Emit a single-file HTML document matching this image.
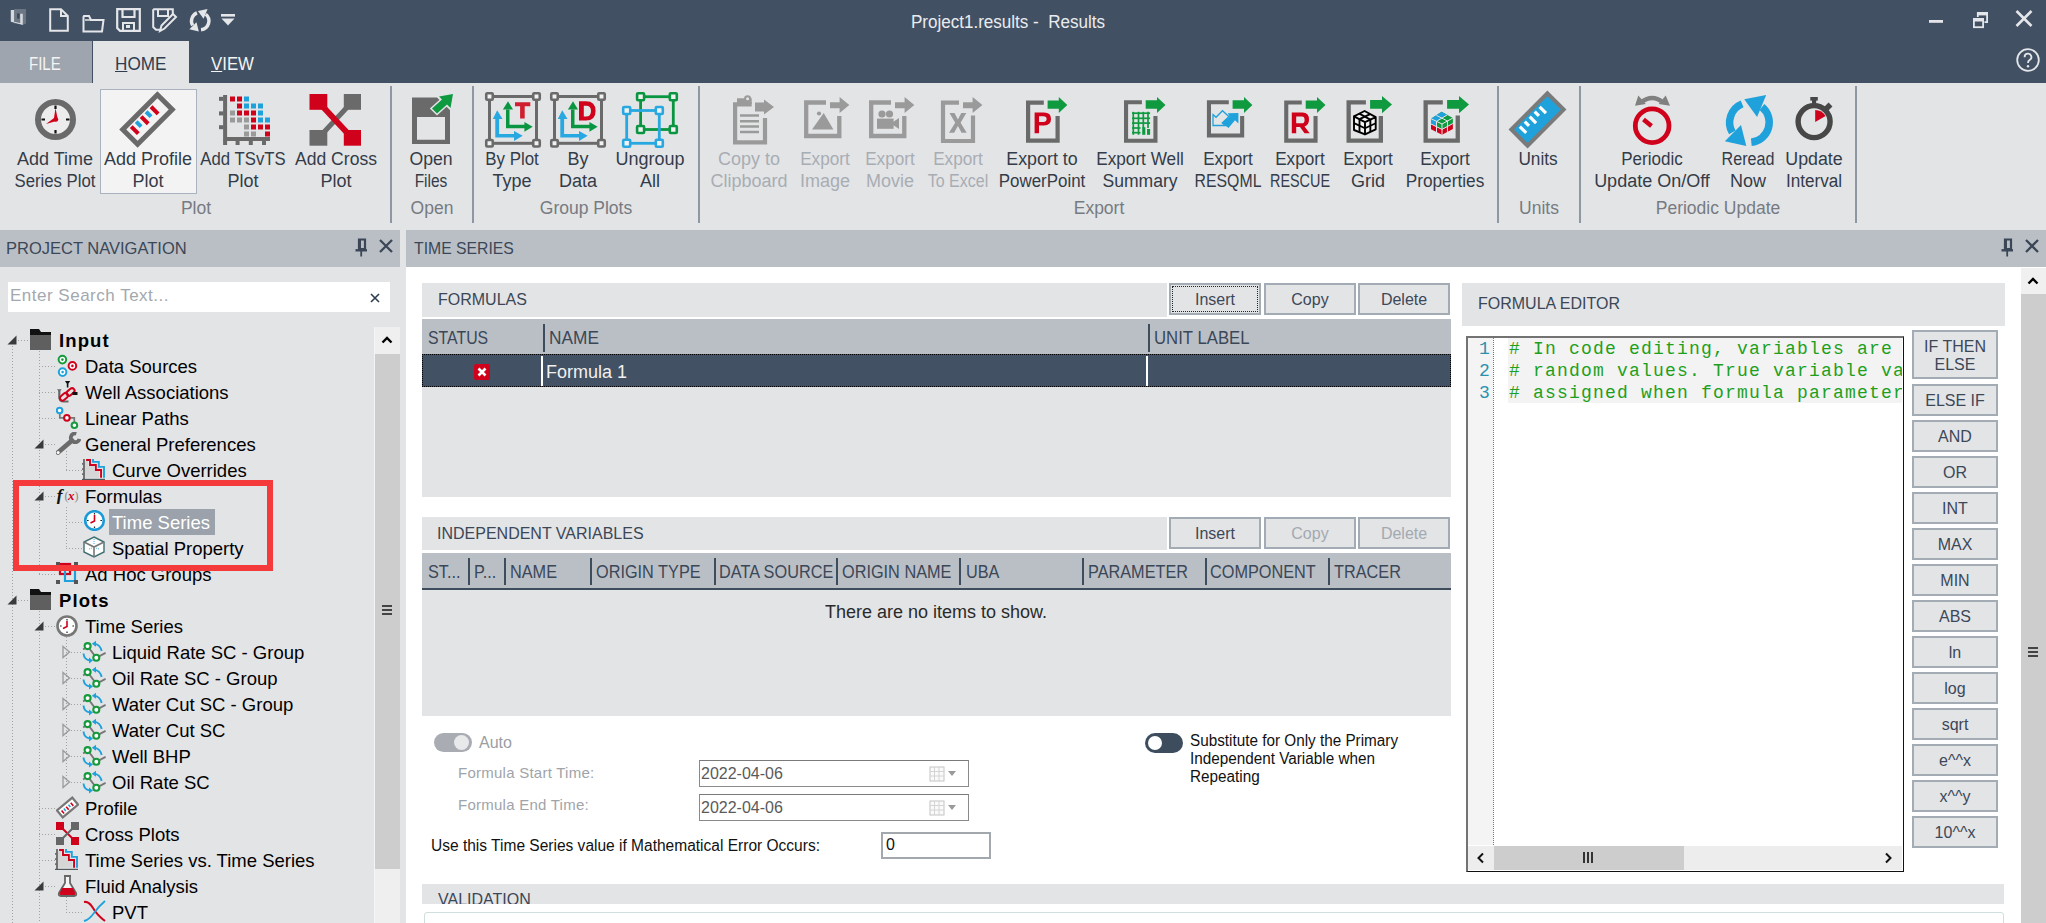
<!DOCTYPE html><html><head><meta charset="utf-8"><style>
*{margin:0;padding:0;box-sizing:border-box}
html,body{width:2046px;height:923px;overflow:hidden;background:#e3e4e6;font-family:"Liberation Sans",sans-serif;position:relative}
.a{position:absolute}
.t{position:absolute;white-space:nowrap}
.rb{position:absolute;text-align:center;white-space:nowrap;font-size:18px;line-height:22px;color:#333c48}
.rb.dis{color:#a8adb4}
.gl{position:absolute;font-size:17.5px;color:#767b82;white-space:nowrap;text-align:center}
.sep{position:absolute;top:86px;width:2px;height:137px;background:#8e98a4}
.tr{position:absolute;font-size:18.5px;color:#1a1a1a;white-space:nowrap;line-height:26px}
.vd{position:absolute;border-left:1px dotted #9a9a9a;width:0}
.hd{position:absolute;border-top:1px dotted #9a9a9a;height:0}
.btn{position:absolute;border:2px solid #a3abb5;background:#e3e4e6;font-size:16px;color:#3c4858;text-align:center}
.fb{position:absolute;left:1912px;width:86px;height:32px;border:2px solid #a3abb5;background:#e3e4e6;font-size:16px;color:#3c4858;text-align:center;line-height:28px}
.gh{position:absolute;font-size:18px;color:#3b4757;white-space:nowrap}
.gs{position:absolute;width:2px;background:#3e4d5e}
</style></head><body><div class="a" style="left:0;top:0;width:2046px;height:83px;background:#425063"></div>
<div class="t" style="left:0;top:10px;width:2016px;text-align:center;font-size:18px;transform:scaleX(0.947);color:#e9ecef;line-height:24px">Project1.results -&nbsp; Results</div>
<svg class="a" style="left:10px;top:9px;overflow:visible" width="17" height="17" viewBox="0 0 17 17"><path d="M4.1 0.3 L15.8 0 V14.5 L12.8 15.9z" fill="#6b7785"/><rect x="4.1" y="0.3" width="11.7" height="14.2" fill="#6b7785"/><rect x="7" y="4.2" width="2.6" height="5.6" rx="1" fill="#3b4858"/><path d="M0.8 1 H4.1 V12.7 L10.2 14 V4.8 H12.8 V15.9 L0.8 12.7z" fill="#d5d8dc"/></svg>
<svg class="a" style="left:49px;top:8px;overflow:visible" width="20" height="24" viewBox="0 0 20 24"><path d="M1.2 1.2 H12 L18.8 8 V22.8 H1.2z M12 1.2 V8 H18.8" fill="none" stroke="#e4e6e9" stroke-width="2"/></svg>
<svg class="a" style="left:82px;top:12px;overflow:visible" width="23" height="21" viewBox="0 0 23 21"><path d="M1.5 5 V19.5 H20 L21.5 8 H9 L7 4 H2z" fill="none" stroke="#e4e6e9" stroke-width="2"/><path d="M3 8 H21" stroke="#e4e6e9" stroke-width="1.5"/></svg>
<svg class="a" style="left:116px;top:8px;overflow:visible" width="25" height="24" viewBox="0 0 25 24"><path d="M1.2 1.2 H23.8 V22.8 H4 L1.2 20z" fill="none" stroke="#e4e6e9" stroke-width="2.2"/><path d="M6.5 2 V9 H18.5 V2" fill="none" stroke="#e4e6e9" stroke-width="2.2"/><path d="M7 22 V15 H18 V22" fill="none" stroke="#e4e6e9" stroke-width="2"/><rect x="10" y="17" width="4" height="3" fill="#e4e6e9"/></svg>
<svg class="a" style="left:152px;top:8px;overflow:visible" width="25" height="25" viewBox="0 0 25 25"><path d="M1.2 1.2 H20.8 V10 M1.2 1.2 V19 L4 21.8 H8" fill="none" stroke="#e4e6e9" stroke-width="2"/><path d="M6 2 V8 H16 V2" fill="none" stroke="#e4e6e9" stroke-width="2"/><path d="M8 23 L9.5 17.5 L21 6 L24 9 L12.5 20.5z" fill="#425063" stroke="#e4e6e9" stroke-width="2"/></svg>
<svg class="a" style="left:189px;top:9px;overflow:visible" width="22" height="23" viewBox="0 0 22 23"><g transform="scale(0.44)"><path d="M18.1 8.9 A20 20 0 0 0 8.3 37.4" fill="none" stroke="#e4e6e9" stroke-width="7.8"/><path d="M17 30 L22.3 51 L0.8 46.2z" fill="#e4e6e9"/><path d="M27.3 47.3 A20 20 0 0 0 38 12" fill="none" stroke="#e4e6e9" stroke-width="7.8"/><path d="M20.2 4.3 L42.2 0 L33.1 22z" fill="#e4e6e9"/></g></svg>
<svg class="a" style="left:221px;top:14px;overflow:visible" width="14" height="12" viewBox="0 0 14 12"><rect x="0" y="0" width="14" height="2.6" fill="#e4e6e9"/><path d="M0.5 4.5 H13.5 L7 11.5z" fill="#e4e6e9"/></svg>
<svg class="a" style="left:1929px;top:20px;overflow:visible" width="15" height="4" viewBox="0 0 15 4"><rect x="0" y="0" width="14" height="2.8" fill="#e4e6e9"/></svg>
<svg class="a" style="left:1972px;top:11px;overflow:visible" width="17" height="18" viewBox="0 0 17 18"><path d="M5.8 6 V1.9 H15.1 V11.2 H12.5" fill="none" stroke="#e4e6e9" stroke-width="1.8"/><rect x="5" y="1" width="10.9" height="3.4" fill="#e4e6e9"/><rect x="1.9" y="8" width="9.2" height="8.2" fill="none" stroke="#e4e6e9" stroke-width="1.8"/><rect x="1" y="7.1" width="11" height="3.4" fill="#e4e6e9"/></svg>
<svg class="a" style="left:2015px;top:10px;overflow:visible" width="18" height="17" viewBox="0 0 18 17"><path d="M1.5 1 L16.5 16 M16.5 1 L1.5 16" stroke="#e4e6e9" stroke-width="2.6"/></svg>
<svg class="a" style="left:2016px;top:48px;overflow:visible" width="24" height="24" viewBox="0 0 24 24"><circle cx="12" cy="12" r="10.8" fill="none" stroke="#e4e6e9" stroke-width="1.8"/><path d="M8.6 9.2 A3.4 3.4 0 1 1 13.6 12 Q12 13 12 15" fill="none" stroke="#e4e6e9" stroke-width="1.8"/><circle cx="12" cy="18.3" r="1.2" fill="#e4e6e9"/></svg>
<div class="a" style="left:0;top:41px;width:92px;height:42px;background:#9ea5ae"></div>
<div class="t" style="left:29px;top:54px;font-size:17.5px;color:#f4f4f4;line-height:20px;transform:scaleX(0.86);transform-origin:0 0">FILE</div>
<div class="a" style="left:93px;top:41px;width:96px;height:42px;background:#e3e4e6"></div>
<div class="t" style="left:115px;top:54px;font-size:17.5px;color:#2f3d4f;line-height:20px;transform:scaleX(0.98);transform-origin:0 0"><u>H</u>OME</div>
<div class="t" style="left:211px;top:54px;font-size:17.5px;color:#f4f4f4;line-height:20px;transform:scaleX(0.96);transform-origin:0 0"><u>V</u>IEW</div>
<div class="a" style="left:100px;top:89px;width:97px;height:105px;background:#f3f3f3;border:1px solid #a9b3bf"></div>
<div class="rb" style="left:-25px;top:148px;width:160px;">Add Time</div>
<div class="rb" style="left:-25px;top:170px;width:160px;transform:scaleX(0.93);">Series Plot</div>
<div class="rb" style="left:68px;top:148px;width:160px;">Add Profile</div>
<div class="rb" style="left:68px;top:170px;width:160px;">Plot</div>
<div class="rb" style="left:163px;top:148px;width:160px;transform:scaleX(0.93);">Add TSvTS</div>
<div class="rb" style="left:163px;top:170px;width:160px;">Plot</div>
<div class="rb" style="left:256px;top:148px;width:160px;transform:scaleX(0.975);">Add Cross</div>
<div class="rb" style="left:256px;top:170px;width:160px;">Plot</div>
<div class="rb" style="left:351px;top:148px;width:160px;transform:scaleX(0.98);">Open</div>
<div class="rb" style="left:351px;top:170px;width:160px;transform:scaleX(0.86);">Files</div>
<div class="rb" style="left:432px;top:148px;width:160px;transform:scaleX(0.94);">By Plot</div>
<div class="rb" style="left:432px;top:170px;width:160px;">Type</div>
<div class="rb" style="left:498px;top:148px;width:160px;">By</div>
<div class="rb" style="left:498px;top:170px;width:160px;">Data</div>
<div class="rb" style="left:570px;top:148px;width:160px;">Ungroup</div>
<div class="rb" style="left:570px;top:170px;width:160px;">All</div>
<div class="rb dis" style="left:669px;top:148px;width:160px;">Copy to</div>
<div class="rb dis" style="left:669px;top:170px;width:160px;">Clipboard</div>
<div class="rb dis" style="left:745px;top:148px;width:160px;transform:scaleX(0.955);">Export</div>
<div class="rb dis" style="left:745px;top:170px;width:160px;">Image</div>
<div class="rb dis" style="left:810px;top:148px;width:160px;transform:scaleX(0.955);">Export</div>
<div class="rb dis" style="left:810px;top:170px;width:160px;">Movie</div>
<div class="rb dis" style="left:878px;top:148px;width:160px;transform:scaleX(0.955);">Export</div>
<div class="rb dis" style="left:878px;top:170px;width:160px;transform:scaleX(0.89);">To Excel</div>
<div class="rb" style="left:962px;top:148px;width:160px;transform:scaleX(0.99);">Export to</div>
<div class="rb" style="left:962px;top:170px;width:160px;transform:scaleX(0.94);">PowerPoint</div>
<div class="rb" style="left:1060px;top:148px;width:160px;transform:scaleX(0.955);">Export Well</div>
<div class="rb" style="left:1060px;top:170px;width:160px;transform:scaleX(0.975);">Summary</div>
<div class="rb" style="left:1148px;top:148px;width:160px;transform:scaleX(0.955);">Export</div>
<div class="rb" style="left:1148px;top:170px;width:160px;transform:scaleX(0.88);">RESQML</div>
<div class="rb" style="left:1220px;top:148px;width:160px;transform:scaleX(0.955);">Export</div>
<div class="rb" style="left:1220px;top:170px;width:160px;transform:scaleX(0.8);">RESCUE</div>
<div class="rb" style="left:1288px;top:148px;width:160px;transform:scaleX(0.955);">Export</div>
<div class="rb" style="left:1288px;top:170px;width:160px;">Grid</div>
<div class="rb" style="left:1365px;top:148px;width:160px;transform:scaleX(0.955);">Export</div>
<div class="rb" style="left:1365px;top:170px;width:160px;transform:scaleX(0.957);">Properties</div>
<div class="rb" style="left:1458px;top:148px;width:160px;transform:scaleX(0.956);">Units</div>
<div class="rb" style="left:1572px;top:148px;width:160px;transform:scaleX(0.945);">Periodic</div>
<div class="rb" style="left:1572px;top:170px;width:160px;">Update On/Off</div>
<div class="rb" style="left:1668px;top:148px;width:160px;transform:scaleX(0.895);">Reread</div>
<div class="rb" style="left:1668px;top:170px;width:160px;">Now</div>
<div class="rb" style="left:1734px;top:148px;width:160px;transform:scaleX(0.99);">Update</div>
<div class="rb" style="left:1734px;top:170px;width:160px;transform:scaleX(0.95);">Interval</div>
<div class="sep" style="left:390px"></div>
<div class="sep" style="left:472px"></div>
<div class="sep" style="left:698px"></div>
<div class="sep" style="left:1497px"></div>
<div class="sep" style="left:1579px"></div>
<div class="sep" style="left:1855px"></div>
<div class="gl" style="left:96px;top:197.5px;width:200px;line-height:20px">Plot</div>
<div class="gl" style="left:332px;top:197.5px;width:200px;line-height:20px">Open</div>
<div class="gl" style="left:486px;top:197.5px;width:200px;line-height:20px">Group Plots</div>
<div class="gl" style="left:999px;top:197.5px;width:200px;line-height:20px">Export</div>
<div class="gl" style="left:1439px;top:197.5px;width:200px;line-height:20px">Units</div>
<div class="gl" style="left:1618px;top:197.5px;width:200px;line-height:20px">Periodic Update</div>
<svg class="a" style="left:35px;top:99px;overflow:visible" width="41" height="41" viewBox="0 0 41 41"><circle cx="20.5" cy="20.5" r="17.5" fill="#ececec" stroke="#6a6a6a" stroke-width="6"/><path d="M20.5 6.5v3.5M20.5 31v3.5M6.5 20.5H10M31 20.5h3.5" stroke="#111" stroke-width="2.2"/><path d="M20.5 9 L22.5 19 L21.5 22 L11 25 L19 19z" fill="#d0021b"/><circle cx="21" cy="20.5" r="2.2" fill="#d0021b"/></svg>
<svg class="a" style="left:120px;top:92px;overflow:visible" width="55" height="55" viewBox="0 0 55 55"><g transform="rotate(-45 27.5 27.5)"><rect x="3" y="17" width="49" height="21" fill="#f3f3f3" stroke="#6a6a6a" stroke-width="5"/><path d="M11 21v10M25 21v10M39 21v10" stroke="#d0021b" stroke-width="4"/><path d="M18 21v7M32 21v7" stroke="#1fa2dc" stroke-width="4"/></g></svg>
<svg class="a" style="left:219px;top:94px;overflow:visible" width="52" height="51" viewBox="0 0 52 51"><path d="M6.1 1 V45.1 H51" fill="none" stroke="#6a6a6a" stroke-width="4"/><rect x="0" y="2.8499999999999996" width="4.5" height="4" fill="#6a6a6a"/><rect x="0" y="17.4" width="4.5" height="4" fill="#6a6a6a"/><rect x="0" y="31.200000000000003" width="4.5" height="4" fill="#6a6a6a"/><rect x="4.1" y="46" width="4" height="5" fill="#6a6a6a"/><rect x="16.6" y="46" width="4" height="5" fill="#6a6a6a"/><rect x="29.8" y="46" width="4" height="5" fill="#6a6a6a"/><rect x="43" y="46" width="4" height="5" fill="#6a6a6a"/><rect x="11" y="2.5" width="5" height="5" fill="#d0021b"/><rect x="18" y="2.5" width="5" height="5" fill="#d0021b"/><rect x="25" y="2.5" width="5" height="5" fill="#1fa2dc"/><rect x="18" y="9.5" width="5" height="5" fill="#d0021b"/><rect x="25" y="9.5" width="5" height="5" fill="#1fa2dc"/><rect x="32" y="9.5" width="5" height="5" fill="#1fa2dc"/><rect x="39" y="9.5" width="5" height="5" fill="#1fa2dc"/><rect x="11" y="16.5" width="5" height="5" fill="#9a9a9a"/><rect x="18" y="16.5" width="5" height="5" fill="#d0021b"/><rect x="25" y="16.5" width="5" height="5" fill="#d0021b"/><rect x="32" y="16.5" width="5" height="5" fill="#d0021b"/><rect x="39" y="16.5" width="5" height="5" fill="#1fa2dc"/><rect x="11" y="23.5" width="5" height="5" fill="#9a9a9a"/><rect x="18" y="23.5" width="5" height="5" fill="#9a9a9a"/><rect x="25" y="23.5" width="5" height="5" fill="#9a9a9a"/><rect x="32" y="23.5" width="5" height="5" fill="#d0021b"/><rect x="39" y="23.5" width="5" height="5" fill="#1fa2dc"/><rect x="46" y="23.5" width="5" height="5" fill="#1fa2dc"/><rect x="25" y="30.5" width="5" height="5" fill="#9a9a9a"/><rect x="32" y="30.5" width="5" height="5" fill="#d0021b"/><rect x="39" y="30.5" width="5" height="5" fill="#d0021b"/><rect x="46" y="30.5" width="5" height="5" fill="#d0021b"/><rect x="25" y="37.5" width="5" height="5" fill="#9a9a9a"/><rect x="32" y="37.5" width="5" height="5" fill="#9a9a9a"/><rect x="46" y="37.5" width="5" height="5" fill="#d0021b"/></svg>
<svg class="a" style="left:309px;top:94px;overflow:visible" width="52" height="52" viewBox="0 0 52 52"><path d="M43 8 L9.5 44" stroke="#6a6a6a" stroke-width="5"/><path d="M9.5 8 L43 44" stroke="#d0021b" stroke-width="6"/><rect x="0.5" y="0" width="17.8" height="15.8" fill="#d0021b"/><rect x="34.8" y="0" width="17.2" height="15.8" fill="#6a6a6a"/><rect x="0.5" y="36" width="17.8" height="15.7" fill="#6a6a6a"/><rect x="34.8" y="36" width="17.2" height="15.7" fill="#d0021b"/></svg>
<svg class="a" style="left:412px;top:94px;overflow:visible" width="42" height="50" viewBox="0 0 42 50"><path d="M0 3.4 H25 L38 16 V50 H0z M5 23 V45.7 H33 V23z" fill="#6a6a6a" fill-rule="evenodd"/><path d="M41 0 L38.5 14 L35 10.5 L25 19.5 L20 14.5 L30 5.5 L27 2.5z" fill="#0f9a40" stroke="#e3e4e6" stroke-width="3" paint-order="stroke" stroke-linejoin="miter"/></svg>
<svg class="a" style="left:485px;top:92px;overflow:visible" width="56" height="56" viewBox="0 0 56 56"><rect x="4.5" y="4.5" width="47.0" height="46.8" fill="none" stroke="#6a6a6a" stroke-width="3"/><rect x="1.25" y="1.25" width="6.5" height="6.5" rx="1" fill="#f2f2f2" stroke="#6a6a6a" stroke-width="2.6"/><rect x="1.25" y="48.05" width="6.5" height="6.5" rx="1" fill="#f2f2f2" stroke="#6a6a6a" stroke-width="2.6"/><rect x="48.25" y="1.25" width="6.5" height="6.5" rx="1" fill="#f2f2f2" stroke="#6a6a6a" stroke-width="2.6"/><rect x="48.25" y="48.05" width="6.5" height="6.5" rx="1" fill="#f2f2f2" stroke="#6a6a6a" stroke-width="2.6"/><path d="M10.3 26.9 H14.1 V42.1 H29 V39 L37.7 43.85 L29 49.1 V45.6 H10.3z" fill="#27a8e0"/><path d="M7.8 26.9 L12.2 18.2 L17.5 26.9z" fill="#27a8e0"/><path d="M21 17.5 H24.5 V32.8 H39.4 V30 L47.7 34.8 L39.4 39.7 V36.2 H21z" fill="#0a9640"/><path d="M17.9 17.5 L23 9.2 L28 17.5z" fill="#0a9640"/><path d="M30 10.2 H45.3 V14.2 H39.7 V26.5 H35.1 V14.2 H30z" fill="#cf1f2e"/></svg>
<svg class="a" style="left:550px;top:92px;overflow:visible" width="56" height="56" viewBox="0 0 56 56"><rect x="4.5" y="4.5" width="47.0" height="46.8" fill="none" stroke="#6a6a6a" stroke-width="3"/><rect x="1.25" y="1.25" width="6.5" height="6.5" rx="1" fill="#f2f2f2" stroke="#6a6a6a" stroke-width="2.6"/><rect x="1.25" y="48.05" width="6.5" height="6.5" rx="1" fill="#f2f2f2" stroke="#6a6a6a" stroke-width="2.6"/><rect x="48.25" y="1.25" width="6.5" height="6.5" rx="1" fill="#f2f2f2" stroke="#6a6a6a" stroke-width="2.6"/><rect x="48.25" y="48.05" width="6.5" height="6.5" rx="1" fill="#f2f2f2" stroke="#6a6a6a" stroke-width="2.6"/><path d="M10.3 26.9 H14.1 V42.1 H29 V39 L37.7 43.85 L29 49.1 V45.6 H10.3z" fill="#27a8e0"/><path d="M7.8 26.9 L12.2 18.2 L17.5 26.9z" fill="#27a8e0"/><path d="M21 17.5 H24.5 V32.8 H39.4 V30 L47.7 34.8 L39.4 39.7 V36.2 H21z" fill="#0a9640"/><path d="M17.9 17.5 L23 9.2 L28 17.5z" fill="#0a9640"/><path d="M29 9.2 H36 Q45.6 9.2 45.6 18.9 Q45.6 28.6 36 28.6 H29z M33.8 13.7 V24.4 H36 Q41 24.4 41 18.9 Q41 13.7 36 13.7z" fill="#d0021b" fill-rule="evenodd"/></svg>
<svg class="a" style="left:621px;top:92px;overflow:visible" width="57" height="57" viewBox="0 0 57 57"><rect x="19.6" y="4.7" width="32.699999999999996" height="32.8" fill="none" stroke="#0a9640" stroke-width="2.8"/><rect x="16.1" y="1.2000000000000002" width="7" height="7" rx="1" fill="#f2f2f2" stroke="#0a9640" stroke-width="2.6"/><rect x="16.1" y="34.0" width="7" height="7" rx="1" fill="#f2f2f2" stroke="#0a9640" stroke-width="2.6"/><rect x="48.8" y="1.2000000000000002" width="7" height="7" rx="1" fill="#f2f2f2" stroke="#0a9640" stroke-width="2.6"/><rect x="48.8" y="34.0" width="7" height="7" rx="1" fill="#f2f2f2" stroke="#0a9640" stroke-width="2.6"/><rect x="5.7" y="18.5" width="32.599999999999994" height="32.8" fill="none" stroke="#27a8e0" stroke-width="2.8"/><rect x="2.2" y="15.0" width="7" height="7" rx="1" fill="#f2f2f2" stroke="#27a8e0" stroke-width="2.6"/><rect x="2.2" y="47.8" width="7" height="7" rx="1" fill="#f2f2f2" stroke="#27a8e0" stroke-width="2.6"/><rect x="34.8" y="15.0" width="7" height="7" rx="1" fill="#f2f2f2" stroke="#27a8e0" stroke-width="2.6"/><rect x="34.8" y="47.8" width="7" height="7" rx="1" fill="#f2f2f2" stroke="#27a8e0" stroke-width="2.6"/></svg>
<svg class="a" style="left:733px;top:94px;overflow:visible" width="42" height="51" viewBox="0 0 42 51"><path d="M18.7 10.3 H2.1 V48.4 H32 V24" fill="none" stroke="#9a9a9a" stroke-width="4.2"/><path d="M4 4.3 H18.7 V10 H4z" fill="#9a9a9a"/><circle cx="14.6" cy="4.8" r="3.6" fill="#9a9a9a"/><circle cx="14.6" cy="4.8" r="1.5" fill="#e3e4e6"/><path d="M7 21.5h19M7 27.3h19M7 32.5h19M7 38h19" stroke="#9a9a9a" stroke-width="2.5"/><path d="M22 8.4 H31 V5.4 L41 12.9 L31 20.4 V17.4 H22z" fill="#9a9a9a"/></svg>
<svg class="a" style="left:804px;top:97px;overflow:visible" width="47" height="42" viewBox="0 0 47 42"><path d="M22 5.5 H2.2 V39 H35.3 V19" fill="none" stroke="#9a9a9a" stroke-width="4.3"/><circle cx="15" cy="16.5" r="2.1" fill="#9a9a9a"/><path d="M8 32.6 L29.4 32.6 L19.7 16z" fill="#9a9a9a"/><path d="M26 5.2 H35.6 V0 L45.3 8 L35.6 16 V11.2 H26z" fill="#9a9a9a"/></svg>
<svg class="a" style="left:869px;top:97px;overflow:visible" width="47" height="42" viewBox="0 0 47 42"><path d="M22 5.5 H2.2 V39 H35.3 V19" fill="none" stroke="#9a9a9a" stroke-width="4.3"/><circle cx="13" cy="17" r="3.6" fill="#9a9a9a"/><circle cx="20.5" cy="17" r="3.6" fill="#9a9a9a"/><rect x="8" y="21.6" width="16.6" height="10.2" fill="#9a9a9a"/><path d="M24 25 L30 21 V32 L24 28z" fill="#9a9a9a"/><path d="M26 5.2 H35.6 V0 L45.3 8 L35.6 16 V11.2 H26z" fill="#9a9a9a"/></svg>
<svg class="a" style="left:941px;top:97px;overflow:visible" width="44" height="46" viewBox="0 0 44 46"><path d="M18 5.7 H2 V44 H32 V18.5" fill="none" stroke="#9a9a9a" stroke-width="4.2"/><path d="M22 5.2 H31.6 V0 L41.4 8 L31.6 16 V11.2 H22z" fill="#9a9a9a"/><path d="M8.5 16 H13.5 L16.9 22.5 L20.3 16 H25.3 L19.6 25.8 L25.7 35.7 H20.6 L16.9 29 L13.1 35.7 H8 L14.2 25.8z" fill="#9a9a9a"/></svg>
<svg class="a" style="left:1026px;top:97px;overflow:visible" width="44" height="47" viewBox="0 0 44 47"><path d="M17.8 5.6 H2.1 V43.6 H31.6 V19" fill="none" stroke="#6a6a6a" stroke-width="4.2"/><path d="M21.6 3.5 H32.8 V0 L41.3 8.0 L32.8 16 V11.7 H21.6z" fill="#0f9a40"/><path d="M8.6 15.6 H18 Q25 15.6 25 22 Q25 28.4 18 28.4 H13 V36.3 H8.6z M13 19.3 V24.9 H17.5 Q20.6 24.9 20.6 22.1 Q20.6 19.3 17.5 19.3z" fill="#d0021b" fill-rule="evenodd"/></svg>
<svg class="a" style="left:1123px;top:97px;overflow:visible" width="44" height="47" viewBox="0 0 44 47"><path d="M18.9 5.25 H3.05 V43.75 H32.45 V19" fill="none" stroke="#6a6a6a" stroke-width="4.1"/><path d="M22.7 3.2 H34 V0 L42.5 8.0 L34 16 V11.8 H22.7z" fill="#0f9a40"/><path d="M10.3 14.8 V37.8" stroke="#0f9a40" stroke-width="1.7"/><path d="M15.5 14.8 V37.8" stroke="#0f9a40" stroke-width="1.7"/><path d="M20.3 14.8 V31" stroke="#0f9a40" stroke-width="1.7"/><path d="M25 14.8 V31" stroke="#0f9a40" stroke-width="1.7"/><path d="M9 16.2 H27.1" stroke="#0f9a40" stroke-width="1.7"/><path d="M9 21.3 H27.1" stroke="#0f9a40" stroke-width="1.7"/><path d="M9 26.1 H27.1" stroke="#0f9a40" stroke-width="1.7"/><path d="M9 31 H17.5" stroke="#0f9a40" stroke-width="1.7"/><path d="M9 35.7 H17.5" stroke="#0f9a40" stroke-width="1.7"/><rect x="19.2" y="30.2" width="3.1" height="7.6" fill="#0f9a40"/><rect x="24" y="32" width="3.1" height="5.8" fill="#0f9a40"/></svg>
<svg class="a" style="left:1206px;top:97px;overflow:visible" width="48" height="42" viewBox="0 0 48 42"><path d="M22.8 5.25 H2.9499999999999997 V38.45 H36.150000000000006 V19" fill="none" stroke="#6a6a6a" stroke-width="4.1"/><path d="M26.6 3.2 H38 V0 L46.4 8.0 L38 16 V11.8 H26.6z" fill="#0f9a40"/><path d="M32.4 15.9 V26.5 L29 23.3 L22.5 30.9 L16 25.8 L23.5 19.5 L21.8 16.2z" fill="#1fa2dc"/><path d="M7 17.6 L10 20.3 L16.5 13.7 L22.8 19.6 L16.2 26 L19.5 28.5 H7z" fill="none" stroke="#1fa2dc" stroke-width="1.3" stroke-linejoin="miter"/></svg>
<svg class="a" style="left:1283px;top:97px;overflow:visible" width="44" height="47" viewBox="0 0 44 47"><path d="M18.8 5.55 H3.25 V43.650000000000006 H32.550000000000004 V19" fill="none" stroke="#6a6a6a" stroke-width="4.1"/><path d="M22.7 3.5 H34 V0 L42.5 8.0 L34 16 V11.7 H22.7z" fill="#0f9a40"/><path d="M8.8 15.6 H19.5 Q26 15.6 26 22.8 Q26 27.8 21.5 29.6 L26.7 36.3 H21.5 L17 30 H13.2 V36.3 H8.8z M13.2 19.6 V26.3 H19 Q21.6 26.3 21.6 22.95 Q21.6 19.6 19 19.6z" fill="#d0021b" fill-rule="evenodd"/></svg>
<svg class="a" style="left:1346px;top:96px;overflow:visible" width="47" height="48" viewBox="0 0 47 48"><path d="M19.9 6.35 H2.65 V44.65 H34.85 V20" fill="none" stroke="#6a6a6a" stroke-width="4.3"/><path d="M24.1 3.9 H36 V0 L46 8.6 L36 17.2 V12.8 H24.1z" fill="#0f9a40"/><path d="M18.60 15.00 L29.70 21.20 L19.00 26.10 L8.00 20.30z M8.00 20.30 L19.00 26.10 L19.00 38.40 L8.00 34.00z M19.00 26.10 L29.70 21.20 L29.70 33.30 L19.00 38.40z" fill="#f4f4f4" stroke="#000" stroke-width="1.9" stroke-linejoin="round"/><path d="M13.30 17.65 L24.35 23.65" stroke="#000" stroke-width="1.9"/><path d="M24.15 18.10 L13.50 23.20" stroke="#000" stroke-width="1.9"/><path d="M8.00 27.15 L19.00 32.25" stroke="#000" stroke-width="1.9"/><path d="M19.00 32.25 L29.70 27.25" stroke="#000" stroke-width="1.9"/><path d="M13.50 23.20 L13.50 36.20" stroke="#000" stroke-width="1.9"/><path d="M24.35 23.65 L24.35 35.85" stroke="#000" stroke-width="1.9"/></svg>
<svg class="a" style="left:1423px;top:96px;overflow:visible" width="47" height="48" viewBox="0 0 47 48"><path d="M19.8 6.35 H2.65 V44.65 H34.75 V19.6" fill="none" stroke="#6a6a6a" stroke-width="4.3"/><path d="M24.1 3.9 H36 V0 L46 8.6 L36 17.2 V12.8 H24.1z" fill="#0f9a40"/><path d="M18.60 15.80 L29.90 22.00 L19.00 28.00 L8.00 22.70z" fill="#0f9a40"/><path d="M18.60 15.80 L24.25 18.90 L13.50 25.35 L8.00 22.70z" fill="#1fa2dc"/><path d="M8.00 22.70 L19.00 28.00 L19.00 33.40 L8.00 28.00z" fill="#0f9a40"/><path d="M8.00 22.70 L13.50 25.35 L13.50 30.70 L8.00 28.00z" fill="#1fa2dc"/><path d="M8.00 28.00 L19.00 33.40 L19.00 38.80 L8.00 33.30z" fill="#d0021b"/><path d="M19.00 28.00 L29.90 22.00 L29.90 27.50 L19.00 33.40z" fill="#0f9a40"/><path d="M19.00 33.40 L29.90 27.50 L29.90 33.00 L19.00 38.80z" fill="#d0021b"/><path d="M13.30 19.25 L24.45 25.00" stroke="#e3e4e6" stroke-width="1"/><path d="M24.25 18.90 L13.50 25.35" stroke="#e3e4e6" stroke-width="1"/><path d="M8.00 28.00 L19.00 33.40" stroke="#e3e4e6" stroke-width="1"/><path d="M19.00 33.40 L29.90 27.50" stroke="#e3e4e6" stroke-width="1"/><path d="M13.50 25.35 L13.50 36.05" stroke="#e3e4e6" stroke-width="1"/><path d="M24.45 25.00 L24.45 35.90" stroke="#e3e4e6" stroke-width="1"/><path d="M19.00 28.00 L19.00 38.80" stroke="#e3e4e6" stroke-width="1"/><path d="M8.00 22.70 L19.00 28.00" stroke="#e3e4e6" stroke-width="1"/><path d="M19.00 28.00 L29.90 22.00" stroke="#e3e4e6" stroke-width="1"/></svg>
<svg class="a" style="left:1510px;top:92px;overflow:visible" width="55" height="55" viewBox="0 0 55 55"><g transform="rotate(-45 27.5 27.5)"><rect x="2" y="16" width="51" height="23" fill="#1fa2dc" stroke="#7a7a7a" stroke-width="4"/><path d="M10 20v9M17 20v6M24 20v9M31 20v6M38 20v9" stroke="#fff" stroke-width="3.2"/></g></svg>
<svg class="a" style="left:1632px;top:95px;overflow:visible" width="40" height="51" viewBox="0 0 40 51"><circle cx="20.15" cy="30.75" r="16.85" fill="none" stroke="#d0021b" stroke-width="4.8"/><path d="M11.5 24.5 L19.5 31" stroke="#d0021b" stroke-width="4.5"/><path d="M9 7.5 Q20.3 -1.5 31 7.5" fill="none" stroke="#808080" stroke-width="4.2"/><path d="M3 10.7 L6.3 0.5 L13.8 9z" fill="#808080"/><path d="M38 10.7 L33.7 0.5 L26.7 9z" fill="#808080"/></svg>
<svg class="a" style="left:1724px;top:95px;overflow:visible" width="50" height="52" viewBox="0 0 50 52"><path d="M18.1 8.9 A20 20 0 0 0 8.3 37.4" fill="none" stroke="#1fa2dc" stroke-width="7.5"/><path d="M17 30 L22.3 51 L0.8 46.2z" fill="#1fa2dc"/><path d="M27.3 47.3 A20 20 0 0 0 38 12" fill="none" stroke="#1fa2dc" stroke-width="7.5"/><path d="M20.2 4.3 L42.2 0 L33.1 22z" fill="#1fa2dc"/></svg>
<svg class="a" style="left:1795px;top:97px;overflow:visible" width="40" height="45" viewBox="0 0 40 45"><circle cx="19.1" cy="24.6" r="16" fill="none" stroke="#474747" stroke-width="5.4"/><rect x="15.3" y="0" width="7.5" height="3.6" fill="#474747"/><rect x="17" y="2" width="4.2" height="6" fill="#474747"/><path d="M31 12 L35.5 7.5" stroke="#474747" stroke-width="5.5"/><path d="M20.2 24.9 V13 A12 12 0 0 1 30.6 19z" fill="#d0021b"/></svg>
<div class="a" style="left:0;top:230px;width:400px;height:37px;background:#babfc6"></div>
<div class="t" style="left:5.5px;top:238.3px;font-size:17.3px;color:#3b4757;line-height:20px;transform:scaleX(0.955);transform-origin:0 0">PROJECT NAVIGATION</div>
<div class="a" style="left:8px;top:282px;width:382px;height:30px;background:#fff"></div>
<div class="t" style="left:10px;top:285px;font-size:17px;letter-spacing:0.5px;color:#a3a8ae;line-height:22px">Enter Search Text...</div>

<svg class="a" style="left:355px;top:238px" width="13" height="19"><path d="M4 1.5 H10 V11 H4z" fill="none" stroke="#3b4757" stroke-width="2.2"/><rect x="3" y="1" width="3" height="11" fill="#3b4757"/><path d="M0.5 12.3 H12" stroke="#3b4757" stroke-width="2.4"/><path d="M6.2 13 V18.5" stroke="#3b4757" stroke-width="1.8"/></svg>
<svg class="a" style="left:378px;top:238px" width="16" height="16"><path d="M2 2L14 14M14 2L2 14" stroke="#3b4757" stroke-width="2.3"/></svg>
<svg class="a" style="left:370px;top:293px" width="10" height="10"><path d="M1 1L9 9M9 1L1 9" stroke="#2d3e50" stroke-width="1.6"/></svg>
<div class="a" style="left:374px;top:327px;width:26px;height:596px;background:#cdcdcd;border-left:1px solid #f4f4f4"></div>
<div class="a" style="left:375px;top:327px;width:25px;height:27px;background:#efefef"></div>
<svg class="a" style="left:381px;top:335px" width="12" height="9"><path d="M1.5 7.5L6 3L10.5 7.5" stroke="#000" stroke-width="2.4" fill="none"/></svg>
<div class="a" style="left:375px;top:869px;width:25px;height:54px;background:#efefef"></div>
<svg class="a" style="left:381px;top:604px" width="12" height="12"><path d="M1 2h10M1 6h10M1 10h10" stroke="#444" stroke-width="2"/></svg>

<div class="a" style="left:12px;top:346px;width:1px;height:577px;background:repeating-linear-gradient(to bottom,#a2a2a2 0 1px,transparent 1px 3px)"></div>
<div class="a" style="left:39px;top:351px;width:1px;height:224px;background:repeating-linear-gradient(to bottom,#a2a2a2 0 1px,transparent 1px 3px)"></div>
<div class="a" style="left:39px;top:611px;width:1px;height:312px;background:repeating-linear-gradient(to bottom,#a2a2a2 0 1px,transparent 1px 3px)"></div>
<div class="a" style="left:66px;top:451px;width:1px;height:20px;background:repeating-linear-gradient(to bottom,#a2a2a2 0 1px,transparent 1px 3px)"></div>
<div class="a" style="left:66px;top:507px;width:1px;height:42px;background:repeating-linear-gradient(to bottom,#a2a2a2 0 1px,transparent 1px 3px)"></div>
<div class="a" style="left:66px;top:637px;width:1px;height:146px;background:repeating-linear-gradient(to bottom,#a2a2a2 0 1px,transparent 1px 3px)"></div>
<div class="a" style="left:66px;top:897px;width:1px;height:16px;background:repeating-linear-gradient(to bottom,#a2a2a2 0 1px,transparent 1px 3px)"></div>
<svg class="a" style="left:7px;top:335px" width="10" height="10"><path d="M0.5 9.5 L9.5 0.5 V9.5z" fill="#3a3a3a"/></svg>
<div class="a" style="left:18px;top:340px;width:10px;height:1px;background:repeating-linear-gradient(to right,#a2a2a2 0 1px,transparent 1px 3px)"></div>
<svg class="a" style="left:29px;top:329px" width="23" height="21" viewBox="0 0 23 21"><path d="M1 0h9l2 3h10v3H1z" fill="#111"/><rect x="1" y="6" width="21" height="15" fill="#5f5f5f"/></svg>
<div class="tr" style="left:59px;top:327.5px;color:#000;font-weight:bold;letter-spacing:1.1px">Input</div>
<div class="a" style="left:39px;top:366px;width:16px;height:1px;background:repeating-linear-gradient(to right,#a2a2a2 0 1px,transparent 1px 3px)"></div>
<svg class="a" style="left:56px;top:354px" width="23" height="23" viewBox="0 0 23 23"><circle cx="6.4" cy="5.6" r="3.8" fill="#fff" stroke="#159a3c" stroke-width="2"/><circle cx="6.4" cy="5.6" r="1.3" fill="#159a3c"/><circle cx="16.4" cy="11.9" r="3.8" fill="#fff" stroke="#d0021b" stroke-width="2"/><circle cx="16.4" cy="11.9" r="1.3" fill="#d0021b"/><circle cx="6.6" cy="18.1" r="3.8" fill="#fff" stroke="#1fa2dc" stroke-width="2"/><circle cx="6.6" cy="18.1" r="1.3" fill="#1fa2dc"/></svg>
<div class="tr" style="left:85px;top:353.5px;color:#000;font-weight:normal">Data Sources</div>
<div class="a" style="left:39px;top:392px;width:16px;height:1px;background:repeating-linear-gradient(to right,#a2a2a2 0 1px,transparent 1px 3px)"></div>
<svg class="a" style="left:56px;top:380px" width="23" height="23" viewBox="0 0 23 23"><path d="M3.3 11 V17 Q3.3 21.5 8 21.5 H12.5" fill="none" stroke="#666" stroke-width="2.2"/><path d="M1 9.3 H5.7 L3.3 12.3z" fill="#666"/><g fill="none" stroke="#d0021b" stroke-width="2"><rect x="3.5" y="14.3" width="9" height="5" rx="2.5" transform="rotate(-40 8 16.8)"/><rect x="10" y="9.5" width="9" height="5" rx="2.5" transform="rotate(-40 14.5 12)"/></g><path d="M9 1 H14.2 L11.6 5z" fill="#111"/><path d="M11.6 4 V7.5" stroke="#111" stroke-width="1.6"/><rect x="16.5" y="12" width="5" height="3" fill="#111"/></svg>
<div class="tr" style="left:85px;top:379.5px;color:#000;font-weight:normal">Well Associations</div>
<div class="a" style="left:39px;top:418px;width:16px;height:1px;background:repeating-linear-gradient(to right,#a2a2a2 0 1px,transparent 1px 3px)"></div>
<svg class="a" style="left:56px;top:406px" width="23" height="24" viewBox="0 0 23 24"><path d="M3.8 7 V11.9 H18.3 V17" fill="none" stroke="#777" stroke-width="1.7"/><circle cx="3.6" cy="4.5" r="2.8" fill="#fff" stroke="#1fa2dc" stroke-width="2"/><circle cx="10.9" cy="11.9" r="2.8" fill="#fff" stroke="#d0021b" stroke-width="2"/><circle cx="18.4" cy="19.3" r="2.8" fill="#fff" stroke="#159a3c" stroke-width="2"/></svg>
<div class="tr" style="left:85px;top:405.5px;color:#000;font-weight:normal">Linear Paths</div>
<svg class="a" style="left:34px;top:439px" width="10" height="10"><path d="M0.5 9.5 L9.5 0.5 V9.5z" fill="#3a3a3a"/></svg>
<div class="a" style="left:45px;top:444px;width:10px;height:1px;background:repeating-linear-gradient(to right,#a2a2a2 0 1px,transparent 1px 3px)"></div>
<svg class="a" style="left:56px;top:432px" width="25" height="25" viewBox="0 0 25 25"><path d="M2 20.5 L16 8.5" stroke="#6b6b6b" stroke-width="4.8" stroke-linecap="round"/><path d="M23.45 6.94 A4.4 4.4 0 1 1 20.34 1.55" fill="none" stroke="#6b6b6b" stroke-width="3.8"/><circle cx="2.1" cy="20.4" r="1.5" fill="#fff"/></svg>
<div class="tr" style="left:85px;top:431.5px;color:#000;font-weight:normal">General Preferences</div>
<div class="a" style="left:66px;top:470px;width:16px;height:1px;background:repeating-linear-gradient(to right,#a2a2a2 0 1px,transparent 1px 3px)"></div>
<svg class="a" style="left:82px;top:459px" width="24" height="22" viewBox="0 0 24 22"><path d="M3 2 H6 V7 H12 V12 H17 V18.7 H3z" fill="#d6d6d6"/><path d="M2 0 V20.2" stroke="#5f5f5f" stroke-width="1.7"/><path d="M0 20.4 H23" stroke="#4f5a5a" stroke-width="1.2"/><rect x="0" y="4.2" width="1.3" height="1.4" fill="#555"/><rect x="0" y="9.4" width="1.3" height="1.4" fill="#555"/><rect x="0" y="14.4" width="1.3" height="1.4" fill="#555"/><path d="M4.1 1 H8 V6 H13.85 V11 H19.05 V18.7" fill="none" stroke="#d0021b" stroke-width="1.9"/><path d="M11 0 V2.9 H16.8 V7.9 H22 V18.7" fill="none" stroke="#1fa2dc" stroke-width="1.9"/></svg>
<div class="tr" style="left:112px;top:457.5px;color:#000;font-weight:normal">Curve Overrides</div>
<svg class="a" style="left:34px;top:491px" width="10" height="10"><path d="M0.5 9.5 L9.5 0.5 V9.5z" fill="#3a3a3a"/></svg>
<div class="a" style="left:45px;top:496px;width:10px;height:1px;background:repeating-linear-gradient(to right,#a2a2a2 0 1px,transparent 1px 3px)"></div>
<svg class="a" style="left:56px;top:484px" width="23" height="20" viewBox="0 0 23 20"><text x="0.5" y="17.5" font-family="Liberation Serif" font-style="italic" font-weight="bold" font-size="18" fill="#111">f</text><text x="8.5" y="16" font-family="Liberation Serif" font-size="12" fill="#888">(</text><text x="12" y="16" font-family="Liberation Serif" font-style="italic" font-weight="bold" font-size="13" fill="#d0021b">x</text><text x="18.5" y="16" font-family="Liberation Serif" font-size="12" fill="#888">)</text></svg>
<div class="tr" style="left:85px;top:483.5px;color:#000;font-weight:normal">Formulas</div>
<div class="a" style="left:66px;top:522px;width:16px;height:1px;background:repeating-linear-gradient(to right,#a2a2a2 0 1px,transparent 1px 3px)"></div>
<svg class="a" style="left:83px;top:510px" width="23" height="21" viewBox="0 0 23 21"><circle cx="11.5" cy="10.5" r="9.3" fill="#fff" stroke="#1a9ad6" stroke-width="2.6"/><path d="M11.5 3v1.6M11.5 16.4V18M4 10.5h1.6M17.4 10.5H19" stroke="#222" stroke-width="1.2"/><path d="M11.5 5 V11 L7.5 13" fill="none" stroke="#d0021b" stroke-width="1.6"/></svg>
<div class="a" style="left:109px;top:509px;width:106px;height:26px;background:#9ba2ab"></div>
<div class="tr" style="left:112px;top:509.5px;color:#fff;font-weight:normal">Time Series</div>
<div class="a" style="left:66px;top:548px;width:16px;height:1px;background:repeating-linear-gradient(to right,#a2a2a2 0 1px,transparent 1px 3px)"></div>
<svg class="a" style="left:83px;top:536px" width="22" height="22" viewBox="0 0 22 22"><path d="M11 1 L21 6 V16 L11 21 L1 16 V6z" fill="#fff" stroke="#3f6f73" stroke-width="1.4"/><path d="M1 6 L11 11 L21 6 M11 11 V21" fill="none" stroke="#777" stroke-width="1.6"/><path d="M11 3v5M6 13l3 -1M16 13l-3 -1" stroke="#1fa2dc" stroke-width="0.9" stroke-dasharray="1 1"/></svg>
<div class="tr" style="left:112px;top:535.5px;color:#000;font-weight:normal">Spatial Property</div>
<div class="a" style="left:39px;top:574px;width:16px;height:1px;background:repeating-linear-gradient(to right,#a2a2a2 0 1px,transparent 1px 3px)"></div>
<svg class="a" style="left:56px;top:562px" width="22" height="22" viewBox="0 0 22 22"><rect x="4" y="2" width="10" height="10" fill="none" stroke="#d0021b" stroke-width="2.2"/><path d="M9 8 V19 H19 V9" fill="none" stroke="#1fa2dc" stroke-width="2.2"/><rect x="0" y="0" width="4" height="4" fill="#555"/><rect x="18" y="0" width="4" height="4" fill="#555"/><rect x="0" y="18" width="4" height="4" fill="#555"/><rect x="18" y="18" width="4" height="4" fill="#555"/></svg>
<div class="tr" style="left:85px;top:561.5px;color:#000;font-weight:normal">Ad Hoc Groups</div>
<svg class="a" style="left:7px;top:595px" width="10" height="10"><path d="M0.5 9.5 L9.5 0.5 V9.5z" fill="#3a3a3a"/></svg>
<div class="a" style="left:18px;top:600px;width:10px;height:1px;background:repeating-linear-gradient(to right,#a2a2a2 0 1px,transparent 1px 3px)"></div>
<svg class="a" style="left:29px;top:589px" width="23" height="21" viewBox="0 0 23 21"><path d="M1 0h9l2 3h10v3H1z" fill="#111"/><rect x="1" y="6" width="21" height="15" fill="#5f5f5f"/></svg>
<div class="tr" style="left:59px;top:587.5px;color:#000;font-weight:bold;letter-spacing:1.1px">Plots</div>
<svg class="a" style="left:34px;top:621px" width="10" height="10"><path d="M0.5 9.5 L9.5 0.5 V9.5z" fill="#3a3a3a"/></svg>
<div class="a" style="left:45px;top:626px;width:10px;height:1px;background:repeating-linear-gradient(to right,#a2a2a2 0 1px,transparent 1px 3px)"></div>
<svg class="a" style="left:56px;top:615px" width="22" height="22" viewBox="0 0 22 22"><circle cx="11" cy="11" r="9.5" fill="#fff" stroke="#777" stroke-width="2.6"/><path d="M11 4v1.6M11 16.4V18M4 11h1.6M16.4 11H18" stroke="#222" stroke-width="1.2"/><path d="M11 6 V11.5 L7 13.5" fill="none" stroke="#d0021b" stroke-width="1.6"/></svg>
<div class="tr" style="left:85px;top:613.5px;color:#000;font-weight:normal">Time Series</div>
<div class="a" style="left:71px;top:652px;width:11px;height:1px;background:repeating-linear-gradient(to right,#a2a2a2 0 1px,transparent 1px 3px)"></div>
<svg class="a" style="left:82px;top:640px" width="24" height="24" viewBox="0 0 24 24"><path d="M1.2 9.5 L5.6 6.1 L14.3 17.8 L23.6 12.9" fill="none" stroke="#777" stroke-width="1.8"/><path d="M12.5 3.6 Q18 4.5 19.7 11" fill="none" stroke="#1fa2dc" stroke-width="1.9"/><path d="M9.8 3.8 L14 0.8 L14 6.8z" fill="#1fa2dc"/><path d="M1.5 13.5 Q2 19.5 8 20.5" fill="none" stroke="#1fa2dc" stroke-width="1.9"/><path d="M11 20.5 L7 17.5 L7 23.5z" fill="#1fa2dc"/><circle cx="5.6" cy="6.1" r="3" fill="#fff" stroke="#159a3c" stroke-width="2.1"/><circle cx="14.3" cy="17.8" r="3" fill="#fff" stroke="#159a3c" stroke-width="2.1"/></svg>
<div class="tr" style="left:112px;top:639.5px;color:#000;font-weight:normal">Liquid Rate SC - Group</div>
<svg class="a" style="left:62px;top:645px" width="9" height="14"><path d="M1 1.5 L7.5 7 L1 12.5z" fill="none" stroke="#9a9a9a" stroke-width="1.3"/></svg>
<div class="a" style="left:71px;top:678px;width:11px;height:1px;background:repeating-linear-gradient(to right,#a2a2a2 0 1px,transparent 1px 3px)"></div>
<svg class="a" style="left:82px;top:666px" width="24" height="24" viewBox="0 0 24 24"><path d="M1.2 9.5 L5.6 6.1 L14.3 17.8 L23.6 12.9" fill="none" stroke="#777" stroke-width="1.8"/><path d="M12.5 3.6 Q18 4.5 19.7 11" fill="none" stroke="#1fa2dc" stroke-width="1.9"/><path d="M9.8 3.8 L14 0.8 L14 6.8z" fill="#1fa2dc"/><path d="M1.5 13.5 Q2 19.5 8 20.5" fill="none" stroke="#1fa2dc" stroke-width="1.9"/><path d="M11 20.5 L7 17.5 L7 23.5z" fill="#1fa2dc"/><circle cx="5.6" cy="6.1" r="3" fill="#fff" stroke="#159a3c" stroke-width="2.1"/><circle cx="14.3" cy="17.8" r="3" fill="#fff" stroke="#159a3c" stroke-width="2.1"/></svg>
<div class="tr" style="left:112px;top:665.5px;color:#000;font-weight:normal">Oil Rate SC - Group</div>
<svg class="a" style="left:62px;top:671px" width="9" height="14"><path d="M1 1.5 L7.5 7 L1 12.5z" fill="none" stroke="#9a9a9a" stroke-width="1.3"/></svg>
<div class="a" style="left:71px;top:704px;width:11px;height:1px;background:repeating-linear-gradient(to right,#a2a2a2 0 1px,transparent 1px 3px)"></div>
<svg class="a" style="left:82px;top:692px" width="24" height="24" viewBox="0 0 24 24"><path d="M1.2 9.5 L5.6 6.1 L14.3 17.8 L23.6 12.9" fill="none" stroke="#777" stroke-width="1.8"/><path d="M12.5 3.6 Q18 4.5 19.7 11" fill="none" stroke="#1fa2dc" stroke-width="1.9"/><path d="M9.8 3.8 L14 0.8 L14 6.8z" fill="#1fa2dc"/><path d="M1.5 13.5 Q2 19.5 8 20.5" fill="none" stroke="#1fa2dc" stroke-width="1.9"/><path d="M11 20.5 L7 17.5 L7 23.5z" fill="#1fa2dc"/><circle cx="5.6" cy="6.1" r="3" fill="#fff" stroke="#159a3c" stroke-width="2.1"/><circle cx="14.3" cy="17.8" r="3" fill="#fff" stroke="#159a3c" stroke-width="2.1"/></svg>
<div class="tr" style="left:112px;top:691.5px;color:#000;font-weight:normal">Water Cut SC - Group</div>
<svg class="a" style="left:62px;top:697px" width="9" height="14"><path d="M1 1.5 L7.5 7 L1 12.5z" fill="none" stroke="#9a9a9a" stroke-width="1.3"/></svg>
<div class="a" style="left:71px;top:730px;width:11px;height:1px;background:repeating-linear-gradient(to right,#a2a2a2 0 1px,transparent 1px 3px)"></div>
<svg class="a" style="left:82px;top:718px" width="24" height="24" viewBox="0 0 24 24"><path d="M1.2 9.5 L5.6 6.1 L14.3 17.8 L23.6 12.9" fill="none" stroke="#777" stroke-width="1.8"/><path d="M12.5 3.6 Q18 4.5 19.7 11" fill="none" stroke="#1fa2dc" stroke-width="1.9"/><path d="M9.8 3.8 L14 0.8 L14 6.8z" fill="#1fa2dc"/><path d="M1.5 13.5 Q2 19.5 8 20.5" fill="none" stroke="#1fa2dc" stroke-width="1.9"/><path d="M11 20.5 L7 17.5 L7 23.5z" fill="#1fa2dc"/><circle cx="5.6" cy="6.1" r="3" fill="#fff" stroke="#159a3c" stroke-width="2.1"/><circle cx="14.3" cy="17.8" r="3" fill="#fff" stroke="#159a3c" stroke-width="2.1"/></svg>
<div class="tr" style="left:112px;top:717.5px;color:#000;font-weight:normal">Water Cut SC</div>
<svg class="a" style="left:62px;top:723px" width="9" height="14"><path d="M1 1.5 L7.5 7 L1 12.5z" fill="none" stroke="#9a9a9a" stroke-width="1.3"/></svg>
<div class="a" style="left:71px;top:756px;width:11px;height:1px;background:repeating-linear-gradient(to right,#a2a2a2 0 1px,transparent 1px 3px)"></div>
<svg class="a" style="left:82px;top:744px" width="24" height="24" viewBox="0 0 24 24"><path d="M1.2 9.5 L5.6 6.1 L14.3 17.8 L23.6 12.9" fill="none" stroke="#777" stroke-width="1.8"/><path d="M12.5 3.6 Q18 4.5 19.7 11" fill="none" stroke="#1fa2dc" stroke-width="1.9"/><path d="M9.8 3.8 L14 0.8 L14 6.8z" fill="#1fa2dc"/><path d="M1.5 13.5 Q2 19.5 8 20.5" fill="none" stroke="#1fa2dc" stroke-width="1.9"/><path d="M11 20.5 L7 17.5 L7 23.5z" fill="#1fa2dc"/><circle cx="5.6" cy="6.1" r="3" fill="#fff" stroke="#159a3c" stroke-width="2.1"/><circle cx="14.3" cy="17.8" r="3" fill="#fff" stroke="#159a3c" stroke-width="2.1"/></svg>
<div class="tr" style="left:112px;top:743.5px;color:#000;font-weight:normal">Well BHP</div>
<svg class="a" style="left:62px;top:749px" width="9" height="14"><path d="M1 1.5 L7.5 7 L1 12.5z" fill="none" stroke="#9a9a9a" stroke-width="1.3"/></svg>
<div class="a" style="left:71px;top:782px;width:11px;height:1px;background:repeating-linear-gradient(to right,#a2a2a2 0 1px,transparent 1px 3px)"></div>
<svg class="a" style="left:82px;top:770px" width="24" height="24" viewBox="0 0 24 24"><path d="M1.2 9.5 L5.6 6.1 L14.3 17.8 L23.6 12.9" fill="none" stroke="#777" stroke-width="1.8"/><path d="M12.5 3.6 Q18 4.5 19.7 11" fill="none" stroke="#1fa2dc" stroke-width="1.9"/><path d="M9.8 3.8 L14 0.8 L14 6.8z" fill="#1fa2dc"/><path d="M1.5 13.5 Q2 19.5 8 20.5" fill="none" stroke="#1fa2dc" stroke-width="1.9"/><path d="M11 20.5 L7 17.5 L7 23.5z" fill="#1fa2dc"/><circle cx="5.6" cy="6.1" r="3" fill="#fff" stroke="#159a3c" stroke-width="2.1"/><circle cx="14.3" cy="17.8" r="3" fill="#fff" stroke="#159a3c" stroke-width="2.1"/></svg>
<div class="tr" style="left:112px;top:769.5px;color:#000;font-weight:normal">Oil Rate SC</div>
<svg class="a" style="left:62px;top:775px" width="9" height="14"><path d="M1 1.5 L7.5 7 L1 12.5z" fill="none" stroke="#9a9a9a" stroke-width="1.3"/></svg>
<div class="a" style="left:39px;top:808px;width:16px;height:1px;background:repeating-linear-gradient(to right,#a2a2a2 0 1px,transparent 1px 3px)"></div>
<svg class="a" style="left:56px;top:796px" width="23" height="23" viewBox="0 0 23 23"><g transform="rotate(-40 11.5 11.5)"><rect x="1.5" y="7" width="20" height="9" fill="#fff" stroke="#777" stroke-width="2.2"/><path d="M5 10v4M11 10v4M17 10v4" stroke="#d0021b" stroke-width="1.6"/><path d="M8 10v3M14 10v3" stroke="#1fa2dc" stroke-width="1.6"/></g></svg>
<div class="tr" style="left:85px;top:795.5px;color:#000;font-weight:normal">Profile</div>
<div class="a" style="left:39px;top:834px;width:16px;height:1px;background:repeating-linear-gradient(to right,#a2a2a2 0 1px,transparent 1px 3px)"></div>
<svg class="a" style="left:56px;top:822px" width="23" height="23" viewBox="0 0 23 23"><path d="M6 6 L17 17" stroke="#d0021b" stroke-width="2"/><path d="M17 6 L6 17" stroke="#666" stroke-width="2"/><rect x="0" y="0" width="8" height="8" fill="#d0021b"/><rect x="15" y="0" width="8" height="8" fill="#666"/><rect x="0" y="15" width="8" height="8" fill="#666"/><rect x="15" y="15" width="8" height="8" fill="#d0021b"/></svg>
<div class="tr" style="left:85px;top:821.5px;color:#000;font-weight:normal">Cross Plots</div>
<div class="a" style="left:39px;top:860px;width:16px;height:1px;background:repeating-linear-gradient(to right,#a2a2a2 0 1px,transparent 1px 3px)"></div>
<svg class="a" style="left:55px;top:849px" width="24" height="22" viewBox="0 0 24 22"><path d="M3 2 H6 V7 H12 V12 H17 V18.7 H3z" fill="#d6d6d6"/><path d="M2 0 V20.2" stroke="#5f5f5f" stroke-width="1.7"/><path d="M0 20.4 H23" stroke="#4f5a5a" stroke-width="1.2"/><rect x="0" y="4.2" width="1.3" height="1.4" fill="#555"/><rect x="0" y="9.4" width="1.3" height="1.4" fill="#555"/><rect x="0" y="14.4" width="1.3" height="1.4" fill="#555"/><path d="M4.1 1 H8 V6 H13.85 V11 H19.05 V18.7" fill="none" stroke="#d0021b" stroke-width="1.9"/><path d="M11 0 V2.9 H16.8 V7.9 H22 V18.7" fill="none" stroke="#1fa2dc" stroke-width="1.9"/></svg>
<div class="tr" style="left:85px;top:847.5px;color:#000;font-weight:normal">Time Series vs. Time Series</div>
<svg class="a" style="left:34px;top:881px" width="10" height="10"><path d="M0.5 9.5 L9.5 0.5 V9.5z" fill="#3a3a3a"/></svg>
<div class="a" style="left:45px;top:886px;width:10px;height:1px;background:repeating-linear-gradient(to right,#a2a2a2 0 1px,transparent 1px 3px)"></div>
<svg class="a" style="left:56px;top:874px" width="23" height="23" viewBox="0 0 23 23"><path d="M8 2 H15 M9 2 V9 L3 19 Q2 22 5 22 H18 Q21 22 20 19 L14 9 V2" fill="#f4f4f4" stroke="#666" stroke-width="1.8"/><path d="M6 14 H17 L19.5 19.5 Q20 21 18 21 H5 Q3 21 3.5 19.5z" fill="#d0021b"/></svg>
<div class="tr" style="left:85px;top:873.5px;color:#000;font-weight:normal">Fluid Analysis</div>
<div class="a" style="left:66px;top:912px;width:16px;height:1px;background:repeating-linear-gradient(to right,#a2a2a2 0 1px,transparent 1px 3px)"></div>
<svg class="a" style="left:83px;top:900px" width="23" height="23" viewBox="0 0 23 23"><path d="M1 2 Q6 1 10 8 T22 21" fill="none" stroke="#d0021b" stroke-width="2"/><path d="M1 21 Q6 20 11 13 T22 1" fill="none" stroke="#1fa2dc" stroke-width="1.8"/></svg>
<div class="tr" style="left:112px;top:899.5px;color:#000;font-weight:normal">PVT</div>
<div class="a" style="left:406px;top:230px;width:1640px;height:37px;background:#babfc6"></div>
<div class="t" style="left:414px;top:238.3px;font-size:17.3px;color:#3b4757;line-height:20px;transform:scaleX(0.912);transform-origin:0 0">TIME SERIES</div>
<div class="a" style="left:406px;top:267px;width:1640px;height:656px;background:#fff"></div>
<svg class="a" style="left:2001px;top:238px" width="13" height="19"><path d="M4 1.5 H10 V11 H4z" fill="none" stroke="#3b4757" stroke-width="2.2"/><rect x="3" y="1" width="3" height="11" fill="#3b4757"/><path d="M0.5 12.3 H12" stroke="#3b4757" stroke-width="2.4"/><path d="M6.2 13 V18.5" stroke="#3b4757" stroke-width="1.8"/></svg>
<svg class="a" style="left:2024px;top:238px" width="16" height="16"><path d="M2 2L14 14M14 2L2 14" stroke="#3b4757" stroke-width="2.3"/></svg>
<div class="a" style="left:2021px;top:268px;width:25px;height:655px;background:#cdcdcd"></div>
<div class="a" style="left:2021px;top:268px;width:25px;height:26px;background:#f0f0f0"></div>
<svg class="a" style="left:2027px;top:276px" width="12" height="9"><path d="M1.5 7.5L6 3L10.5 7.5" stroke="#000" stroke-width="2.4" fill="none"/></svg>
<svg class="a" style="left:2027px;top:646px" width="12" height="12"><path d="M1 2h10M1 6h10M1 10h10" stroke="#444" stroke-width="2"/></svg>
<div class="a" style="left:422px;top:283px;width:1029px;height:214px;background:#e3e4e6"></div>
<div class="a" style="left:1167px;top:283px;width:284px;height:34px;background:#fff"></div>
<div class="a" style="left:422px;top:317px;width:1029px;height:2px;background:#fff"></div>
<div class="t" style="left:438px;top:290px;font-size:16px;color:#3b4757;line-height:20px">FORMULAS</div>
<div class="btn" style="left:1169px;top:283px;width:92px;height:32px;line-height:30px">Insert</div>
<div class="a" style="left:1172px;top:286px;width:86px;height:26px;border:1px dotted #222"></div>
<div class="btn" style="left:1264px;top:283px;width:92px;height:32px;line-height:30px">Copy</div>
<div class="btn" style="left:1358px;top:283px;width:92px;height:32px;line-height:30px">Delete</div>
<div class="a" style="left:422px;top:319px;width:1029px;height:35px;background:#babfc6"></div>
<div class="gh" style="left:428px;top:328px;line-height:20px;transform:scaleX(0.88);transform-origin:0 0">STATUS</div>
<div class="gs" style="left:543px;top:324px;height:28px"></div>
<div class="gh" style="left:549px;top:328px;line-height:20px;transform:scaleX(0.96);transform-origin:0 0">NAME</div>
<div class="gs" style="left:1148px;top:324px;height:28px"></div>
<div class="gh" style="left:1154px;top:328px;line-height:20px;transform:scaleX(0.93);transform-origin:0 0">UNIT LABEL</div>
<div class="a" style="left:422px;top:354px;width:1029px;height:33px;background:#425163;border:1px dotted #000"></div>
<div class="a" style="left:541px;top:356px;width:2px;height:30px;background:#fff"></div>
<div class="a" style="left:1146px;top:356px;width:2px;height:30px;background:#fff"></div>
<svg class="a" style="left:474px;top:364px" width="16" height="16"><rect x="0" y="0" width="16" height="16" rx="2" fill="#d0021b"/><path d="M4.5 4.5L11.5 11.5M11.5 4.5L4.5 11.5" stroke="#fff" stroke-width="2.6"/></svg>
<div class="t" style="left:546px;top:361px;font-size:18px;color:#f0f0f0;line-height:22px">Formula 1</div>
<div class="a" style="left:422px;top:517px;width:1029px;height:199px;background:#e3e4e6"></div>
<div class="a" style="left:1167px;top:517px;width:284px;height:33px;background:#fff"></div>
<div class="a" style="left:422px;top:550px;width:1029px;height:3px;background:#fff"></div>
<div class="t" style="left:437px;top:524px;font-size:16px;color:#3b4757;line-height:20px">INDEPENDENT VARIABLES</div>
<div class="btn" style="left:1169px;top:517px;width:92px;height:32px;line-height:30px;color:#3c4858">Insert</div>
<div class="btn" style="left:1264px;top:517px;width:92px;height:32px;line-height:30px;color:#a3a9b1">Copy</div>
<div class="btn" style="left:1358px;top:517px;width:92px;height:32px;line-height:30px;color:#a3a9b1">Delete</div>
<div class="a" style="left:422px;top:553px;width:1029px;height:37px;background:#babfc6;border-bottom:2px solid #3e4d5e"></div>
<div class="gh" style="left:428px;top:562px;line-height:20px;font-size:17.5px;transform:scaleX(0.93);transform-origin:0 0">ST...</div>
<div class="gh" style="left:474px;top:562px;line-height:20px;font-size:17.5px;transform:scaleX(0.93);transform-origin:0 0">P...</div>
<div class="gh" style="left:510px;top:562px;line-height:20px;font-size:17.5px;transform:scaleX(0.93);transform-origin:0 0">NAME</div>
<div class="gh" style="left:596px;top:562px;line-height:20px;font-size:17.5px;transform:scaleX(0.93);transform-origin:0 0">ORIGIN TYPE</div>
<div class="gh" style="left:719px;top:562px;line-height:20px;font-size:17.5px;transform:scaleX(0.93);transform-origin:0 0">DATA SOURCE</div>
<div class="gh" style="left:842px;top:562px;line-height:20px;font-size:17.5px;transform:scaleX(0.93);transform-origin:0 0">ORIGIN NAME</div>
<div class="gh" style="left:966px;top:562px;line-height:20px;font-size:17.5px;transform:scaleX(0.93);transform-origin:0 0">UBA</div>
<div class="gh" style="left:1088px;top:562px;line-height:20px;font-size:17.5px;transform:scaleX(0.93);transform-origin:0 0">PARAMETER</div>
<div class="gh" style="left:1210px;top:562px;line-height:20px;font-size:17.5px;transform:scaleX(0.93);transform-origin:0 0">COMPONENT</div>
<div class="gh" style="left:1334px;top:562px;line-height:20px;font-size:17.5px;transform:scaleX(0.93);transform-origin:0 0">TRACER</div>
<div class="gs" style="left:468px;top:558px;height:27px"></div>
<div class="gs" style="left:504px;top:558px;height:27px"></div>
<div class="gs" style="left:590px;top:558px;height:27px"></div>
<div class="gs" style="left:714px;top:558px;height:27px"></div>
<div class="gs" style="left:836px;top:558px;height:27px"></div>
<div class="gs" style="left:959px;top:558px;height:27px"></div>
<div class="gs" style="left:1082px;top:558px;height:27px"></div>
<div class="gs" style="left:1205px;top:558px;height:27px"></div>
<div class="gs" style="left:1328px;top:558px;height:27px"></div>
<div class="t" style="left:736px;top:601px;width:400px;text-align:center;font-size:18px;color:#2a2a2a;line-height:22px">There are no items to show.</div>
<div class="a" style="left:434px;top:733px;width:38px;height:19px;border-radius:10px;background:#a9adb3"></div>
<div class="a" style="left:454px;top:735px;width:15px;height:15px;border-radius:8px;background:#e8e9eb"></div>
<div class="t" style="left:479px;top:733px;font-size:16px;color:#9a9ea4;line-height:20px">Auto</div>
<div class="t" style="left:458px;top:764px;font-size:15px;color:#a0a4a9;line-height:18px;letter-spacing:0.25px">Formula Start Time:</div>
<div class="t" style="left:458px;top:796px;font-size:15px;color:#a0a4a9;line-height:18px;letter-spacing:0.25px">Formula End Time:</div>
<div class="a" style="left:699px;top:760px;width:270px;height:27px;background:#fff;border:1px solid #8a8a8a;border-top-color:#7a7a7a"></div>
<div class="t" style="left:701px;top:764px;font-size:16px;color:#5a5a5a;line-height:19px">2022-04-06</div>
<svg class="a" style="left:929px;top:766px" width="32" height="16"><rect x="1" y="1" width="14" height="14" fill="#fafafa" stroke="#c4c4c4"/><path d="M1 5.5h14M1 10h14M5.5 1v14M10 1v14" stroke="#d4d4d4"/><path d="M19 5h8l-4 5z" fill="#9a9a9a"/></svg>
<div class="a" style="left:699px;top:794px;width:270px;height:27px;background:#fff;border:1px solid #8a8a8a;border-top-color:#7a7a7a"></div>
<div class="t" style="left:701px;top:798px;font-size:16px;color:#5a5a5a;line-height:19px">2022-04-06</div>
<svg class="a" style="left:929px;top:800px" width="32" height="16"><rect x="1" y="1" width="14" height="14" fill="#fafafa" stroke="#c4c4c4"/><path d="M1 5.5h14M1 10h14M5.5 1v14M10 1v14" stroke="#d4d4d4"/><path d="M19 5h8l-4 5z" fill="#9a9a9a"/></svg>
<div class="t" style="left:431px;top:836px;font-size:16px;color:#111;line-height:19px;transform:scaleX(0.97);transform-origin:0 0">Use this Time Series value if Mathematical Error Occurs:</div>
<div class="a" style="left:881px;top:832px;width:110px;height:27px;background:#fff;border:2px solid #a2a8ae"></div>
<div class="t" style="left:886px;top:835px;font-size:16px;color:#111;line-height:19px">0</div>
<div class="a" style="left:1145px;top:733px;width:38px;height:20px;border-radius:10px;background:#3e4d5e"></div>
<div class="a" style="left:1148px;top:736px;width:14px;height:14px;border-radius:7px;background:#fff"></div>
<div class="t" style="left:1190px;top:732px;font-size:16px;color:#111;line-height:18px;transform:scaleX(0.955);transform-origin:0 0">Substitute for Only the Primary<br>Independent Variable when<br>Repeating</div>
<div class="a" style="left:422px;top:884px;width:1582px;height:20px;background:#e3e4e6;overflow:hidden"><div class="t" style="left:16px;top:6px;font-size:16px;color:#3b4757;line-height:20px">VALIDATION</div></div>
<div class="a" style="left:424px;top:912px;width:1580px;height:20px;border:1px solid #cfdede;border-radius:3px"></div>
<div class="a" style="left:1462px;top:283px;width:543px;height:43px;background:#e3e4e6"></div>
<div class="t" style="left:1478px;top:294px;font-size:16px;color:#3b4757;line-height:20px">FORMULA EDITOR</div>
<div class="a" style="left:1466px;top:336px;width:438px;height:536px;background:#fff;border-style:solid;border-width:2px 1.5px 1.5px 2px;border-color:#737373 #111 #111 #737373"></div>
<div class="a" style="left:1468px;top:338px;width:25px;height:507px;background:#f4f4f4"></div>
<div class="a" style="left:1493px;top:338px;width:1px;height:507px;background:repeating-linear-gradient(to bottom,#2b91af 0 1px,transparent 1px 2px)"></div>
<div class="a" style="left:1508px;top:338px;width:394px;height:65px;background:#f3f3f3"></div>
<div class="t" style="left:1479px;top:338px;font-family:'Liberation Mono';font-size:18px;color:#2b91af;line-height:22px">1</div>
<div class="t" style="left:1509px;top:338px;width:393px;overflow:hidden;font-family:'Liberation Mono';font-size:18px;letter-spacing:1.2px;color:#1ea01e;line-height:22px">#&nbsp;In&nbsp;code&nbsp;editing,&nbsp;variables&nbsp;are&nbsp;</div>
<div class="t" style="left:1479px;top:360px;font-family:'Liberation Mono';font-size:18px;color:#2b91af;line-height:22px">2</div>
<div class="t" style="left:1509px;top:360px;width:393px;overflow:hidden;font-family:'Liberation Mono';font-size:18px;letter-spacing:1.2px;color:#1ea01e;line-height:22px">#&nbsp;random&nbsp;values.&nbsp;True&nbsp;variable&nbsp;va</div>
<div class="t" style="left:1479px;top:382px;font-family:'Liberation Mono';font-size:18px;color:#2b91af;line-height:22px">3</div>
<div class="t" style="left:1509px;top:382px;width:393px;overflow:hidden;font-family:'Liberation Mono';font-size:18px;letter-spacing:1.2px;color:#1ea01e;line-height:22px">#&nbsp;assigned&nbsp;when&nbsp;formula&nbsp;parameter</div>
<div class="a" style="left:1468px;top:846px;width:434px;height:24px;background:#ededed"></div>
<div class="a" style="left:1494px;top:846px;width:190px;height:24px;background:#cdcdcd"></div>
<svg class="a" style="left:1476px;top:852px" width="10" height="12"><path d="M7 1.5L2.5 6L7 10.5" stroke="#111" stroke-width="2" fill="none"/></svg>
<svg class="a" style="left:1883px;top:852px" width="10" height="12"><path d="M3 1.5L7.5 6L3 10.5" stroke="#111" stroke-width="2" fill="none"/></svg>
<svg class="a" style="left:1582px;top:851px" width="12" height="13"><path d="M2 1v11M6 1v11M10 1v11" stroke="#333" stroke-width="2"/></svg>
<div class="fb" style="top:330px;height:49px;line-height:18px;padding-top:6px;">IF THEN<br>ELSE</div>
<div class="fb" style="top:384px;height:32px;line-height:30px;">ELSE IF</div>
<div class="fb" style="top:420px;height:32px;line-height:30px;">AND</div>
<div class="fb" style="top:456px;height:32px;line-height:30px;">OR</div>
<div class="fb" style="top:492px;height:32px;line-height:30px;">INT</div>
<div class="fb" style="top:528px;height:32px;line-height:30px;">MAX</div>
<div class="fb" style="top:564px;height:32px;line-height:30px;">MIN</div>
<div class="fb" style="top:600px;height:32px;line-height:30px;">ABS</div>
<div class="fb" style="top:636px;height:32px;line-height:30px;">ln</div>
<div class="fb" style="top:672px;height:32px;line-height:30px;">log</div>
<div class="fb" style="top:708px;height:32px;line-height:30px;">sqrt</div>
<div class="fb" style="top:744px;height:32px;line-height:30px;">e^^x</div>
<div class="fb" style="top:780px;height:32px;line-height:30px;">x^^y</div>
<div class="fb" style="top:816px;height:32px;line-height:30px;">10^^x</div>
<div class="a" style="left:13px;top:480px;width:260px;height:91px;border:6.5px solid #f43a3a"></div></body></html>
